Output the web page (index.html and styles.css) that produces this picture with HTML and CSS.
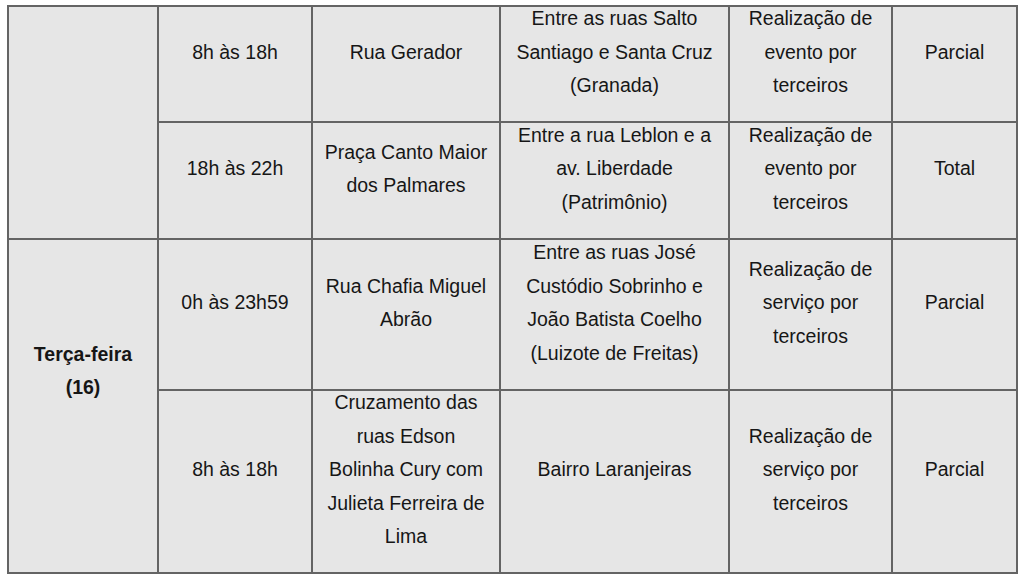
FILE: index.html
```html
<!DOCTYPE html>
<html lang="pt-BR">
<head>
<meta charset="utf-8">
<title>Interdições</title>
<link rel="stylesheet" href="styles.css">
</head>
<body>
<div class="table">
  <div class="cell day day-empty"></div>
  <div class="cell">8h às 18h</div>
  <div class="cell">Rua Gerador</div>
  <div class="cell">Entre as ruas Salto<br>Santiago e Santa Cruz<br>(Granada)</div>
  <div class="cell">Realização de<br>evento por<br>terceiros</div>
  <div class="cell">Parcial</div>

  <div class="cell">18h às 22h</div>
  <div class="cell">Praça Canto Maior<br>dos Palmares</div>
  <div class="cell">Entre a rua Leblon e a<br>av. Liberdade<br>(Patrimônio)</div>
  <div class="cell">Realização de<br>evento por<br>terceiros</div>
  <div class="cell">Total</div>

  <div class="cell day day-tue">Terça-feira<br>(16)</div>
  <div class="cell">0h às 23h59</div>
  <div class="cell">Rua Chafia Miguel<br>Abrão</div>
  <div class="cell">Entre as ruas José<br>Custódio Sobrinho e<br>João Batista Coelho<br>(Luizote de Freitas)</div>
  <div class="cell">Realização de<br>serviço por<br>terceiros</div>
  <div class="cell">Parcial</div>

  <div class="cell">8h às 18h</div>
  <div class="cell">Cruzamento das<br>ruas Edson<br>Bolinha Cury com<br>Julieta Ferreira de<br>Lima</div>
  <div class="cell">Bairro Laranjeiras</div>
  <div class="cell">Realização de<br>serviço por<br>terceiros</div>
  <div class="cell">Parcial</div>
</div>
</body>
</html>
```
FILE: styles.css
```css
html, body {
  margin: 0;
  padding: 0;
  background: #ffffff;
}

.table {
  display: grid;
  grid-template-columns: 148px 152px 186px 227px 161px 123px;
  grid-template-rows: 114px 115px 149px 181px;
  gap: 2px;
  padding: 2px;
  width: max-content;
  margin: 5px 0 0 7px;
  background: #646464;
  font-family: "Liberation Sans", Arial, sans-serif;
  font-size: 19.5px;
  line-height: 33.5px;
  color: #161616;
}

.cell {
  background: #e6e6e6;
  display: flex;
  flex-direction: column;
  justify-content: center;
  align-items: center;
  text-align: center;
  padding: 0 2px 23px;
  white-space: nowrap;
}

.day {
  grid-column: 1;
  font-weight: bold;
}

.day-empty {
  grid-row: 1 / span 2;
}

.day-tue {
  grid-row: 3 / span 2;
  padding-bottom: 70px;
}
```
